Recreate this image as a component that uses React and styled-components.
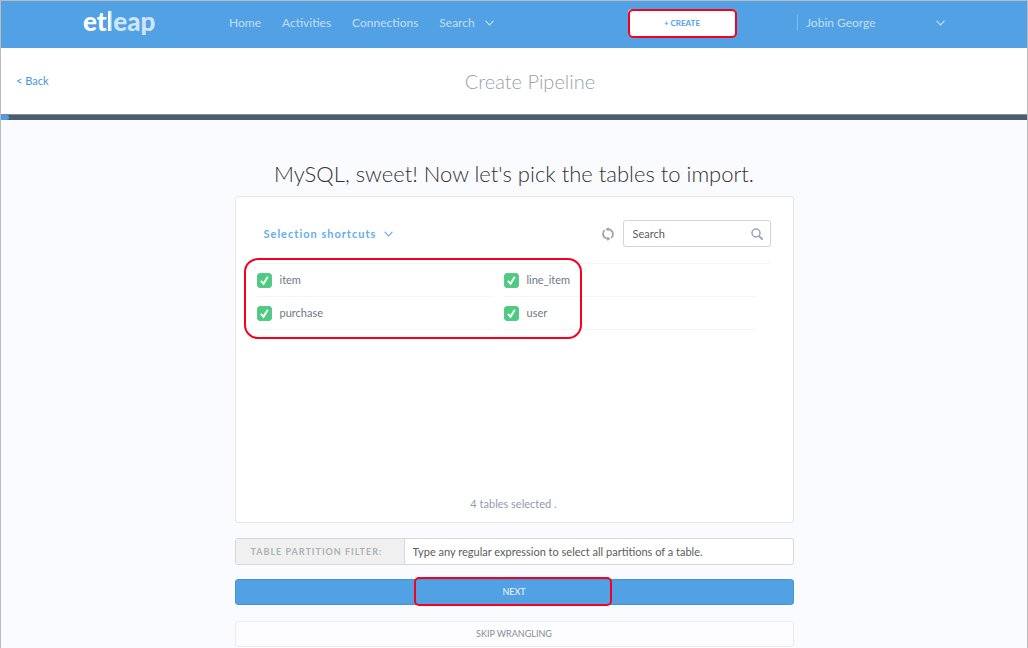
import React from "react";
import styled, { createGlobalStyle, css } from "styled-components";

const blue = "#52a1e5";
const callout = "#f5001d";

const GlobalStyle = createGlobalStyle`
  *, *::before, *::after { box-sizing: border-box; }
  body {
    margin: 0;
    background: #fafbff;
    font-family: Lato, "Liberation Sans", sans-serif;
    font-size: 11px;
    line-height: 16px;
    color: #6d7885;
  }
  button, input { font: inherit; color: inherit; }
  button { cursor: pointer; }
  h1, h2, ul { margin: 0; padding: 0; }
  a { text-decoration: none; color: inherit; }
`;

const Page = styled.div`
  min-height: 100vh;
  border: 1px solid #bbbbbb;
  border-bottom: 0;
`;

const TopBar = styled.header`
  height: 47px;
  background: ${blue};
`;

const TopBarInner = styled.div`
  display: flex;
  align-items: center;
  max-width: 862px;
  height: 44px;
  margin: 0 auto;
  font-size: 12px;
`;

const Logo = styled.a`
  width: 146px;
  padding-bottom: 4px;
  font-size: 26px;
  line-height: 28px;
  font-weight: 900;
  color: #cfe5f9;
`;

const LogoStrong = styled.span`
  color: #ffffff;
`;

const LogoBar = styled.span`
  color: transparent;
  background: linear-gradient(90deg, #ffffff 50%, #cfe5f9 50%);
  background-clip: text;
`;

const Nav = styled.nav`
  display: flex;
  align-items: center;
  gap: 21px;
  color: #c4dff7;
`;

const PlainButton = styled.button`
  display: flex;
  align-items: center;
  gap: 10px;
  padding: 0;
  border: 0;
  background: none;
  text-align: left;
`;

const UserButton = styled(PlainButton)`
  justify-content: space-between;
  width: 148px;
  margin-left: 61px;
  padding-left: 8px;
  border-left: 1px solid #7fbaed;
  color: #c4dff7;
`;

const Highlighted = styled.div`
  position: relative;
`;

const CreateSlot = styled(Highlighted)`
  margin-left: auto;
  width: 108px;
`;

const Callout = styled.span`
  position: absolute;
  inset: ${(p) => p.$inset};
  border: 2px solid ${callout};
  border-radius: ${(p) => p.$radius};
  pointer-events: none;
`;

const CreateButton = styled.button`
  display: block;
  width: 100%;
  height: 28px;
  padding: 0;
  border: 0;
  border-radius: 4px;
  background: #ffffff;
  color: ${blue};
  font-size: 8px;
  font-weight: 700;
`;

const PageHead = styled.div`
  display: grid;
  grid-template-columns: 1fr auto 1fr;
  align-items: center;
  height: 66px;
  padding: 0 15px;
  background: #ffffff;
`;

const BackLink = styled.a`
  color: #3f97e3;
`;

const PageTitle = styled.h1`
  padding-left: 32px;
  font-size: 20px;
  font-weight: 300;
  line-height: 24px;
  color: #98a2ab;
`;

const Progress = styled.div`
  height: 6px;
  background: #4c5e6d;
  border-top: 1px solid #82909b;
`;

const ProgressFill = styled.div`
  width: ${(p) => p.$value}%;
  min-width: 8px;
  height: 5px;
  border-radius: 0 3px 3px 0;
  background: #4a9fe8;
`;

const Main = styled.main`
  max-width: 559px;
  margin: 0 auto;
  padding-top: 40px;
`;

const Question = styled.h2`
  margin-bottom: 8px;
  font-size: 22px;
  font-weight: 300;
  line-height: 28px;
  text-align: center;
  color: #333333;
`;

const frame = css`
  border: 1px solid #e4e6ea;
  border-radius: 3px;
`;

const Panel = styled.section`
  ${frame}
  display: flex;
  flex-direction: column;
  min-height: 327px;
  padding: 23px 22px 10px 21px;
  background: #ffffff;
`;

const PanelTools = styled.div`
  display: flex;
  align-items: center;
  gap: 8px;
  padding: 0 0 16px 7px;
  border-bottom: 1px solid #f5f5f6;
`;

const ShortcutButton = styled(PlainButton)`
  gap: 8px;
  margin-right: auto;
  font-weight: 700;
  letter-spacing: 1px;
  color: #64ade9;
`;

const SearchBox = styled.label`
  display: flex;
  align-items: center;
  width: 148px;
  height: 27px;
  padding: 0 7px 0 9px;
  border: 1px solid #d3d4d6;
  border-radius: 3px;
  color: #96a5c0;
`;

const TextInput = styled.input`
  flex: 1;
  min-width: 0;
  height: 100%;
  padding: 0;
  border: 0;
  outline: 0;
  background: transparent;
  color: #5c5c5c;
  &::placeholder { color: #5c5c5c; opacity: 1; }
`;

const TableArea = styled(Highlighted)`
  padding-right: 15px;
`;

const TableList = styled.ul`
  display: grid;
  grid-template-columns: 236fr 252fr;
  column-gap: 11px;
  list-style: none;
`;

const TableRow = styled.li`
  border-bottom: 1px solid #f5f5f6;
`;

const TableLabel = styled.label`
  display: flex;
  align-items: center;
  gap: 8px;
  height: 32px;
`;

const Tick = styled.span`
  position: relative;
  display: block;
  width: 15px;
  height: 15px;
`;

const TickInput = styled.input`
  appearance: none;
  display: block;
  width: 15px;
  height: 15px;
  margin: 0;
  border: 1px solid #b8c4bd;
  border-radius: 3px;
  background: #ffffff;
  &:checked { background: #4ccb81; border-color: #5fc68b; }
  &:not(:checked) + svg { display: none; }
`;

const TickMark = styled.svg`
  position: absolute;
  inset: 0;
  pointer-events: none;
`;

const Summary = styled.p`
  margin: auto 0 0;
  text-align: center;
  color: #8f9bb0;
`;

const Filter = styled.div`
  display: flex;
  height: 27px;
  margin-top: 15px;
  border: 1px solid #d6d7d9;
  border-radius: 3px;
  background: #ffffff;
`;

const FilterLabel = styled.label`
  width: 169px;
  padding-left: 15px;
  border-right: 1px solid #d6d7d9;
  border-radius: 2px 0 0 2px;
  background: #f0f0f1;
  color: #adb0b4;
  font-size: 9px;
  font-weight: 700;
  line-height: 25px;
  letter-spacing: 1px;
  white-space: nowrap;
`;

const FilterInput = styled(TextInput)`
  padding: 0 8px;
`;

const Actions = styled.div`
  display: grid;
  gap: 16px;
  padding-top: 14px;
`;

const ActionButton = styled.button`
  display: block;
  width: 100%;
  height: 26px;
  padding: 0;
  border: 1px solid ${(p) => (p.$primary ? "#4695db" : "#e9ebee")};
  border-radius: 3px;
  background: ${(p) => (p.$primary ? blue : "#fdfdff")};
  color: ${(p) => (p.$primary ? "#f4f9fe" : "#828d96")};
  font-size: 9px;
`;

const Chevron = ({ size = 9 }) => (
  <svg width={size} height="6" viewBox="0 0 10 6" fill="none" stroke="currentColor" strokeWidth="1.3" strokeLinecap="round" aria-hidden="true">
    <path d="M1 1L5 5L9 1" />
  </svg>
);

const RefreshIcon = () => (
  <svg width="14" height="14" viewBox="0 0 14 14" fill="none" stroke="#a2a4a7" strokeWidth="1.7" aria-hidden="true">
    <path d="M3.2 10.2A5 5 0 0 1 3.8 3.1M6.5 2.2A5 5 0 0 1 11.6 9M10.8 3.8A5 5 0 0 1 10.2 10.9M7.5 11.8A5 5 0 0 1 2.4 5" />
    <path d="M7.6 0L4.6 2.2L7.6 4.4ZM6.4 9.6L9.4 11.8L6.4 14Z" fill="#a2a4a7" stroke="none" />
  </svg>
);

const SearchIcon = () => (
  <svg width="12" height="12" viewBox="0 0 12 12" fill="none" stroke="currentColor" strokeLinecap="round" aria-hidden="true">
    <circle cx="5" cy="5" r="4" strokeWidth="1.5" />
    <path d="M8.2 8.2L11 11" strokeWidth="1.9" />
  </svg>
);

const tables = ["item", "line_item", "purchase", "user"];

export default function App() {
  return (
    <Page>
      <GlobalStyle />
      <TopBar>
        <TopBarInner>
          <Logo href="#" aria-label="etleap">
            <LogoStrong>et</LogoStrong>
            <LogoBar>l</LogoBar>eap
          </Logo>
          <Nav>
            <a href="#home">Home</a>
            <a href="#activities">Activities</a>
            <a href="#connections">Connections</a>
            <PlainButton type="button" aria-haspopup="menu">
              Search <Chevron />
            </PlainButton>
          </Nav>
          <CreateSlot>
            <CreateButton type="button">+ CREATE</CreateButton>
            <Callout $inset="0 -1px -1px 0" $radius="5px" />
          </CreateSlot>
          <UserButton type="button" aria-haspopup="menu">
            Jobin George <Chevron />
          </UserButton>
        </TopBarInner>
      </TopBar>

      <PageHead>
        <BackLink href="#back">&lt; Back</BackLink>
        <PageTitle>Create Pipeline</PageTitle>
      </PageHead>
      <Progress role="progressbar" aria-valuenow={1} aria-label="Pipeline setup">
        <ProgressFill $value={0} />
      </Progress>

      <Main>
        <Question>MySQL, sweet! Now let's pick the tables to import.</Question>
        <Panel>
          <PanelTools>
            <ShortcutButton type="button" aria-haspopup="menu">
              Selection shortcuts <Chevron />
            </ShortcutButton>
            <PlainButton type="button" aria-label="Refresh">
              <RefreshIcon />
            </PlainButton>
            <SearchBox>
              <TextInput type="text" placeholder="Search" aria-label="Search tables" />
              <SearchIcon />
            </SearchBox>
          </PanelTools>
          <TableArea>
            <TableList>
              {tables.map((name) => (
                <TableRow key={name}>
                  <TableLabel>
                    <Tick>
                      <TickInput type="checkbox" defaultChecked />
                      <TickMark width="15" height="15" viewBox="0 0 15 15" fill="none" stroke="#ffffff" strokeWidth="2" aria-hidden="true">
                        <path d="M4 7.8L6.5 10.8L10.8 3.8" />
                      </TickMark>
                    </Tick>
                    {name}
                  </TableLabel>
                </TableRow>
              ))}
            </TableList>
            <Callout $inset="-6px 189px -9px -13px" $radius="14px" />
          </TableArea>
          <Summary>4 tables selected .</Summary>
        </Panel>

        <Filter>
          <FilterLabel htmlFor="partition-filter">TABLE PARTITION FILTER:</FilterLabel>
          <FilterInput
            id="partition-filter"
            type="text"
            placeholder="Type any regular expression to select all partitions of a table."
          />
        </Filter>

        <Actions>
          <Highlighted>
            <ActionButton type="button" $primary>NEXT</ActionButton>
            <Callout $inset="-2px 182px -1px 179px" $radius="5px" />
          </Highlighted>
          <ActionButton type="button">SKIP WRANGLING</ActionButton>
        </Actions>
      </Main>
    </Page>
  );
}
